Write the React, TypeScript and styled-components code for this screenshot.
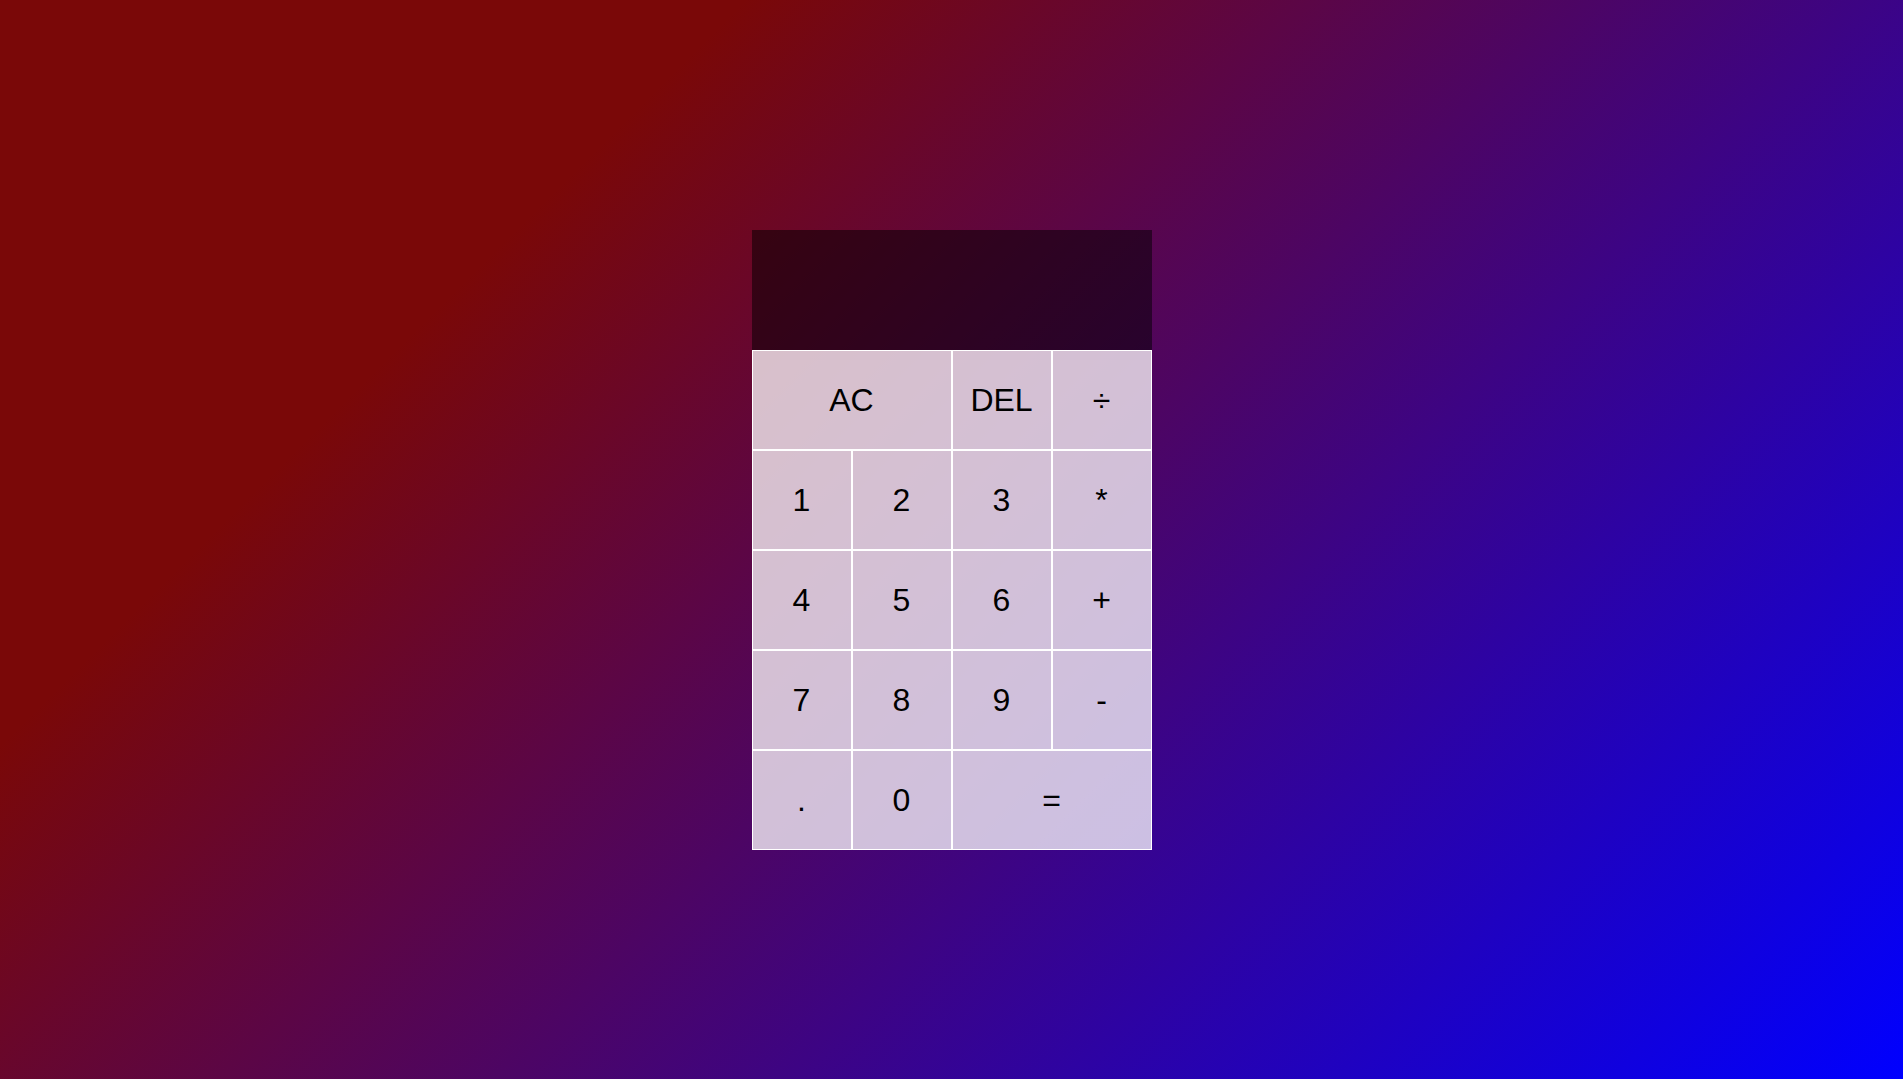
import React from "react";
import styled, { createGlobalStyle } from "styled-components";

const GlobalStyle = createGlobalStyle`
  *, *::before, *::after {
    box-sizing: border-box;
    font-family: "Liberation Sans", Arial, sans-serif;
    font-weight: normal;
  }
  html, body {
    margin: 0;
    padding: 0;
  }
  body {
    min-height: 100vh;
    background: linear-gradient(135deg, #7a0808 0%, #7a0808 25%, #0000ff 100%);
    background-attachment: fixed;
  }
`;

const Grid = styled.div`
  display: grid;
  justify-content: center;
  align-content: center;
  min-height: 100vh;
  grid-template-columns: repeat(4, 100px);
  grid-template-rows: minmax(120px, auto) repeat(5, 100px);
`;

const Output = styled.div`
  grid-column: 1 / -1;
  background-color: rgba(0, 0, 0, 0.5);
  display: flex;
  flex-direction: column;
  align-items: flex-end;
  justify-content: space-around;
  padding: 10px;
  word-wrap: break-word;
  word-break: break-all;
`;

const Key = styled.button<{ $span?: number }>`
  cursor: pointer;
  font-size: 32px;
  color: #000;
  border: 1px solid white;
  outline: none;
  padding: 2px 0 0;
  background-color: rgba(255, 255, 255, 0.75);
  grid-column: ${(p) => (p.$span ? `span ${p.$span}` : "auto")};
`;

const keys: { label: string; span?: number }[] = [
  { label: "AC", span: 2 },
  { label: "DEL" },
  { label: "÷" },
  { label: "1" },
  { label: "2" },
  { label: "3" },
  { label: "*" },
  { label: "4" },
  { label: "5" },
  { label: "6" },
  { label: "+" },
  { label: "7" },
  { label: "8" },
  { label: "9" },
  { label: "-" },
  { label: "." },
  { label: "0" },
  { label: "=", span: 2 },
];

export default function App() {
  return (
    <>
      <GlobalStyle />
      <Grid>
        <Output />
        {keys.map((k) => (
          <Key key={k.label} $span={k.span}>
            {k.label}
          </Key>
        ))}
      </Grid>
    </>
  );
}
